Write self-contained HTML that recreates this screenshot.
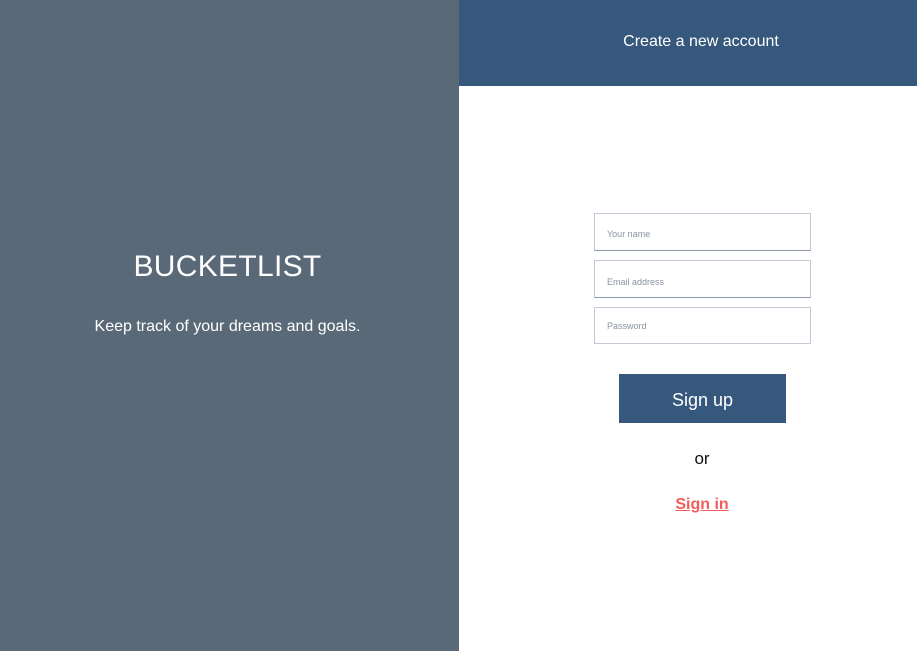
<!DOCTYPE html>
<html><head><meta charset="utf-8"><style>
*{margin:0;padding:0;box-sizing:border-box}
body{width:917px;height:651px;overflow:hidden;font-family:"Liberation Sans",sans-serif;position:relative;background:#fff}
.left{position:absolute;left:0;top:0;width:459px;height:651px;background:#5a6978;color:#fff;text-align:center}
.left h1{position:absolute;top:250px;left:0;width:455px;font-weight:normal;font-size:30px;letter-spacing:0.3px}
.left p{position:absolute;top:318px;left:0;width:455px;font-size:16px}
.hdr{position:absolute;left:459px;top:0;width:458px;height:86px;background:#35587c;color:#fff;font-size:16px;text-align:center;line-height:83px;padding-left:26px}
.in{position:absolute;left:594px;width:217px;border:1px solid #c3cad5;border-bottom-color:#8d9aab;font-size:9px;color:#8a94a2;padding-left:12px}
.btn{position:absolute;left:619px;top:374px;width:167px;height:49px;background:#35587c;color:#fff;font-size:18px;text-align:center;line-height:53px}
.or{position:absolute;left:459px;width:486px;top:449px;text-align:center;font-size:17px;color:#111}
.si{position:absolute;left:459px;width:486px;top:496px;text-align:center;font-size:16px;color:#f25c5c;font-weight:bold;text-decoration:underline}
</style></head><body>
<div class="left"><h1>BUCKETLIST</h1><p>Keep track of your dreams and goals.</p></div>
<div class="hdr">Create a new account</div>
<div class="in" style="top:213px;height:38px;line-height:40px">Your name</div>
<div class="in" style="top:260px;height:38px;line-height:42px">Email address</div>
<div class="in" style="top:307px;height:37px;line-height:37px;border-bottom-color:#c3cad5">Password</div>
<div class="btn">Sign up</div>
<div class="or">or</div>
<div class="si">Sign in</div>
</body></html>
